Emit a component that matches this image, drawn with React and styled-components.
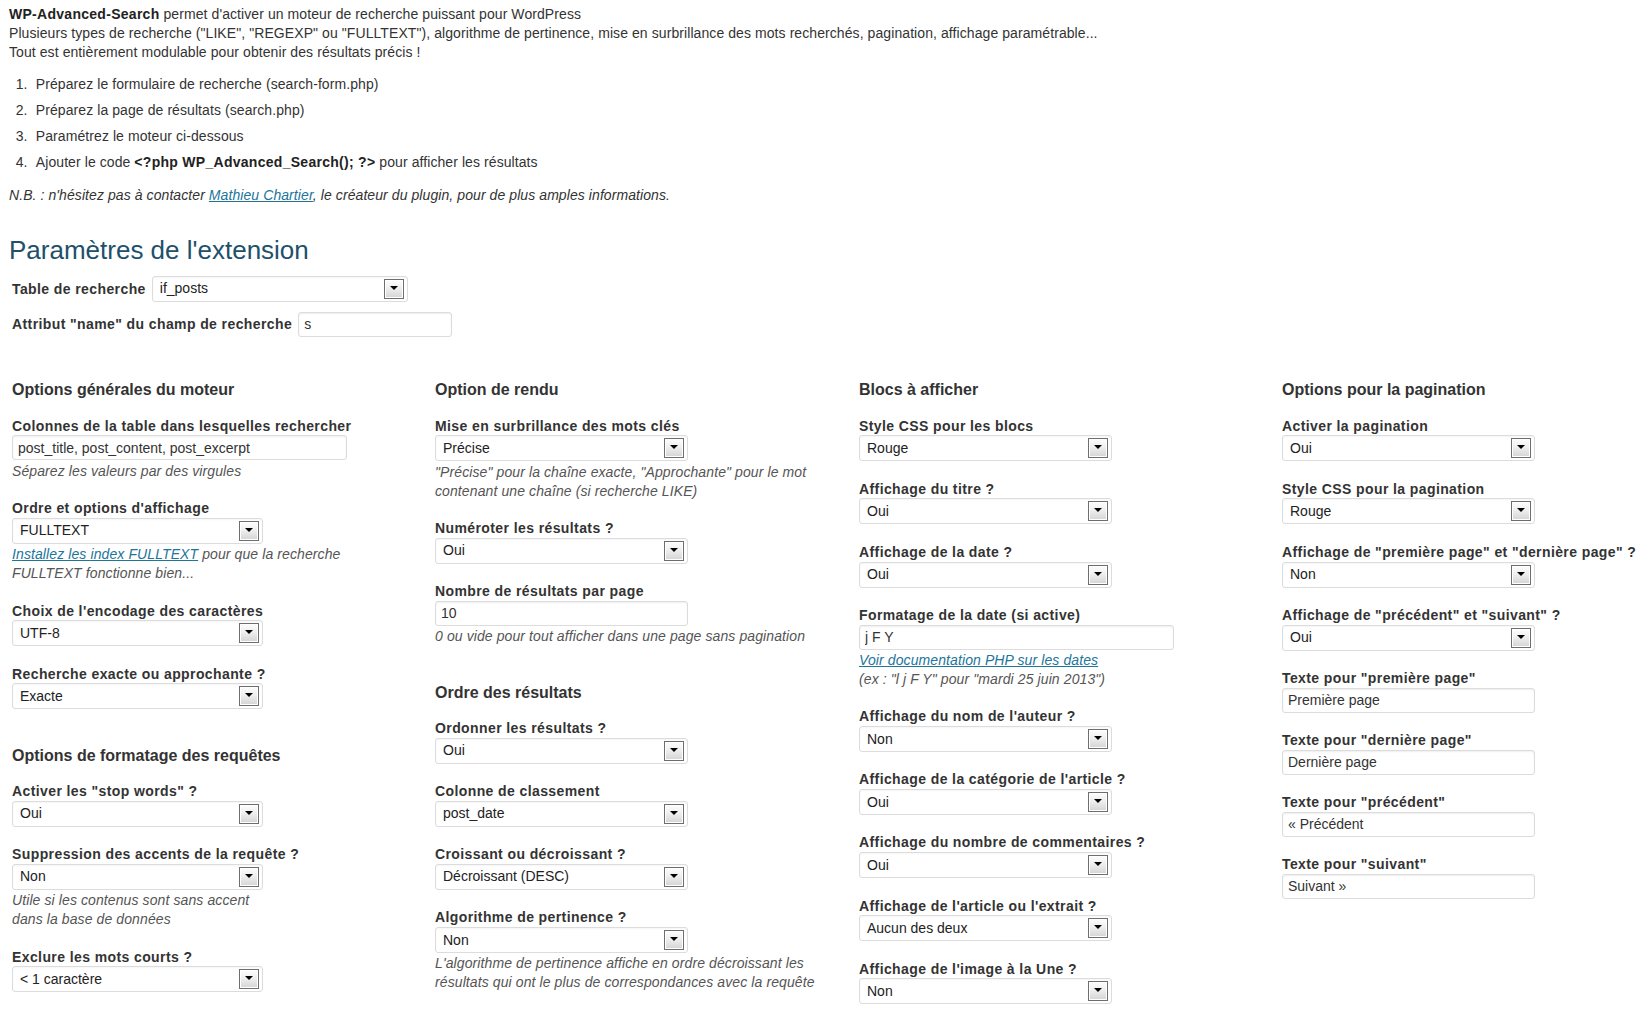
import React from 'react';
import styled, { createGlobalStyle } from 'styled-components';


// styles
const GlobalStyle = createGlobalStyle`
  html, body {
    margin: 0;
    padding: 0;
    background: #fff;
    overflow: hidden;
  }
  body {
    font-family: "Liberation Sans", Arial, sans-serif;
  }
`;

const Page = styled.div`
  padding: 4.5px 0 0 9px;
  font-size: 14px;
  line-height: 19px;
  letter-spacing: 0.08px;
  color: #333;
`;

const Intro = styled.p`
  margin: 0;
`;

const Strong = styled.strong`
  font-weight: bold;
  letter-spacing: 0.28px;
  color: #222;
`;

const Steps = styled.ol`
  list-style: none;
  counter-reset: step;
  margin: 13px 0 0;
  padding: 0;

  & li {
    counter-increment: step;
    margin-bottom: 7px;
  }

  & li::before {
    content: counter(step) ".";
    display: inline-block;
    width: 18.5px;
    margin-right: 8.3px;
    text-align: right;
  }
`;

const Note = styled.p`
  margin: 14px 0 0;
  font-style: italic;
`;

const Link = styled.a`
  color: #21759b;
  text-decoration: underline;
  cursor: pointer;
`;

const Title = styled.h2`
  margin: 29.2px 0 0;
  font-size: 26px;
  line-height: 32px;
  font-weight: normal;
  letter-spacing: 0;
  color: #21506b;
`;

const Settings = styled.div`
  padding-left: 3px;
`;

const InlineRow = styled.div`
  display: flex;
  align-items: center;
  gap: 6px;
  margin-top: ${({ $top }) => $top}px;
`;

const Columns = styled.div`
  display: grid;
  grid-template-columns: 423px 424px 423px 1fr;
  margin-top: 41.5px;
`;

const Section = styled.section`
  & + & {
    margin-top: 34.5px;
  }
`;

const SectionTitle = styled.h3`
  margin: 0 0 15px;
  padding-top: 2px;
  font-size: 16px;
  line-height: 20px;
  font-weight: bold;
  letter-spacing: 0;
  color: #333;
`;

const Field = styled.div`
  margin-bottom: 17.1px;
`;

const Label = styled.label`
  display: ${({ $inline }) => ($inline ? 'inline-block' : 'block')};
  padding-top: ${({ $inline }) => ($inline ? 0 : 1.2)}px;
  margin-bottom: ${({ $inline }) => ($inline ? 0 : 0.8)}px;
  font-size: 14px;
  line-height: 18px;
  font-weight: bold;
  letter-spacing: 0.4px;
  color: #333;
  white-space: nowrap;
`;

const Help = styled.div`
  padding-top: 1.4px;
  font-style: italic;
  line-height: 19px;
  letter-spacing: 0.1px;
  color: #555;
  white-space: nowrap;
`;

const SelectBox = styled.div`
  box-sizing: border-box;
  display: flex;
  align-items: center;
  justify-content: space-between;
  width: ${({ $width }) => $width}px;
  height: 26px;
  padding: 0 3px 0 7px;
  border: 1px solid #dcdcdc;
  border-radius: 3px;
  background: #fff;
  box-shadow: inset 0 1px 2px rgba(0, 0, 0, 0.04);
  font-size: 14px;
  letter-spacing: 0;
  color: #222;
  white-space: nowrap;
`;

const ArrowButton = styled.span`
  box-sizing: border-box;
  display: flex;
  align-items: center;
  justify-content: center;
  width: 20px;
  height: 20px;
  border: 1px solid #6e6e6e;
  background: linear-gradient(to bottom, #fdfdfd 0%, #efefef 45%, #d4d4d4 100%);
  box-shadow: inset 0 0 0 1px #fff;

  &::after {
    content: '';
    margin-top: -2px;
    border-left: 4px solid transparent;
    border-right: 4px solid transparent;
    border-top: 4px solid #000;
  }
`;

const TextInput = styled.input`
  box-sizing: border-box;
  display: block;
  width: ${({ $width }) => $width}px;
  height: 25px;
  margin: 0;
  padding: 0 5px;
  border: 1px solid #dcdcdc;
  border-radius: 3px;
  background: #fff;
  box-shadow: inset 0 1px 2px rgba(0, 0, 0, 0.07);
  font: 14px "Liberation Sans", Arial, sans-serif;
  color: #333;
  outline: none;
`;


// data
const columns = [
  [
    {
      title: 'Options générales du moteur',
      fields: [
        {
          label: 'Colonnes de la table dans lesquelles rechercher',
          input: 'post_title, post_content, post_excerpt',
          width: 335,
          help: 'Séparez les valeurs par des virgules',
        },
        {
          label: "Ordre et options d'affichage",
          select: 'FULLTEXT',
          width: 251,
          help: (
            <>
              <Link>Installez les index FULLTEXT</Link> pour que la recherche
              <br />
              FULLTEXT fonctionne bien...
            </>
          ),
        },
        { label: "Choix de l'encodage des caractères", select: 'UTF-8', width: 251 },
        { label: 'Recherche exacte ou approchante ?', select: 'Exacte', width: 251 },
      ],
    },
    {
      title: 'Options de formatage des requêtes',
      fields: [
        { label: 'Activer les "stop words" ?', select: 'Oui', width: 251 },
        {
          label: 'Suppression des accents de la requête ?',
          select: 'Non',
          width: 251,
          help: (
            <>
              Utile si les contenus sont sans accent
              <br />
              dans la base de données
            </>
          ),
        },
        { label: 'Exclure les mots courts ?', select: '< 1 caractère', width: 251 },
      ],
    },
  ],
  [
    {
      title: 'Option de rendu',
      fields: [
        {
          label: 'Mise en surbrillance des mots clés',
          select: 'Précise',
          help: (
            <>
              "Précise" pour la chaîne exacte, "Approchante" pour le mot
              <br />
              contenant une chaîne (si recherche LIKE)
            </>
          ),
        },
        { label: 'Numéroter les résultats ?', select: 'Oui' },
        {
          label: 'Nombre de résultats par page',
          input: '10',
          help: '0 ou vide pour tout afficher dans une page sans pagination',
        },
      ],
    },
    {
      title: 'Ordre des résultats',
      fields: [
        { label: 'Ordonner les résultats ?', select: 'Oui' },
        { label: 'Colonne de classement', select: 'post_date' },
        { label: 'Croissant ou décroissant ?', select: 'Décroissant (DESC)' },
        {
          label: 'Algorithme de pertinence ?',
          select: 'Non',
          help: (
            <>
              L'algorithme de pertinence affiche en ordre décroissant les
              <br />
              résultats qui ont le plus de correspondances avec la requête
            </>
          ),
        },
      ],
    },
  ],
  [
    {
      title: 'Blocs à afficher',
      fields: [
        { label: 'Style CSS pour les blocs', select: 'Rouge' },
        { label: 'Affichage du titre ?', select: 'Oui' },
        { label: 'Affichage de la date ?', select: 'Oui' },
        {
          label: 'Formatage de la date (si active)',
          input: 'j F Y',
          width: 315,
          help: (
            <>
              <Link>Voir documentation PHP sur les dates</Link>
              <br />
              (ex : "l j F Y" pour "mardi 25 juin 2013")
            </>
          ),
        },
        { label: "Affichage du nom de l'auteur ?", select: 'Non' },
        { label: "Affichage de la catégorie de l'article ?", select: 'Oui' },
        { label: 'Affichage du nombre de commentaires ?', select: 'Oui' },
        { label: "Affichage de l'article ou l'extrait ?", select: 'Aucun des deux' },
        { label: "Affichage de l'image à la Une ?", select: 'Non' },
      ],
    },
  ],
  [
    {
      title: 'Options pour la pagination',
      fields: [
        { label: 'Activer la pagination', select: 'Oui' },
        { label: 'Style CSS pour la pagination', select: 'Rouge' },
        { label: 'Affichage de "première page" et "dernière page" ?', select: 'Non' },
        { label: 'Affichage de "précédent" et "suivant" ?', select: 'Oui' },
        { label: 'Texte pour "première page"', input: 'Première page' },
        { label: 'Texte pour "dernière page"', input: 'Dernière page' },
        { label: 'Texte pour "précédent"', input: '« Précédent' },
        { label: 'Texte pour "suivant"', input: 'Suivant »' },
      ],
    },
  ],
];


// view
const Select = ({ value, width = 253 }) => (
  <SelectBox $width={width}>
    <span>{value}</span>
    <ArrowButton />
  </SelectBox>
);

const FormField = ({ label, select, input, width, help }) => (
  <Field>
    <Label>{label}</Label>
    {select !== undefined
      ? <Select value={select} width={width} />
      : <TextInput $width={width || 253} defaultValue={input} />}
    {help && <Help>{help}</Help>}
  </Field>
);

const App = () => (
  <Page>
    <GlobalStyle />
    <Intro>
      <Strong>WP-Advanced-Search</Strong> permet d'activer un moteur de recherche puissant pour WordPress
      <br />
      Plusieurs types de recherche ("LIKE", "REGEXP" ou "FULLTEXT"), algorithme de pertinence, mise en surbrillance des mots recherchés, pagination, affichage paramétrable...
      <br />
      Tout est entièrement modulable pour obtenir des résultats précis !
    </Intro>
    <Steps>
      <li>Préparez le formulaire de recherche (search-form.php)</li>
      <li>Préparez la page de résultats (search.php)</li>
      <li>Paramétrez le moteur ci-dessous</li>
      <li>
        Ajouter le code <Strong>&lt;?php WP_Advanced_Search(); ?&gt;</Strong> pour afficher les résultats
      </li>
    </Steps>
    <Note>
      N.B. : n'hésitez pas à contacter <Link>Mathieu Chartier</Link>, le créateur du plugin, pour de plus amples informations.
    </Note>

    <Title>Paramètres de l'extension</Title>
    <Settings>
      <InlineRow $top={10.2}>
        <Label $inline>Table de recherche</Label>
        <Select value="if_posts" width={256} />
      </InlineRow>
      <InlineRow $top={10}>
        <Label $inline>Attribut "name" du champ de recherche</Label>
        <TextInput $width={154} defaultValue="s" />
      </InlineRow>

      <Columns>
        {columns.map((sections, i) => (
          <div key={i}>
            {sections.map((section) => (
              <Section key={section.title}>
                <SectionTitle>{section.title}</SectionTitle>
                {section.fields.map((field) => (
                  <FormField key={field.label} {...field} />
                ))}
              </Section>
            ))}
          </div>
        ))}
      </Columns>
    </Settings>
  </Page>
);


// exports
export default App;
